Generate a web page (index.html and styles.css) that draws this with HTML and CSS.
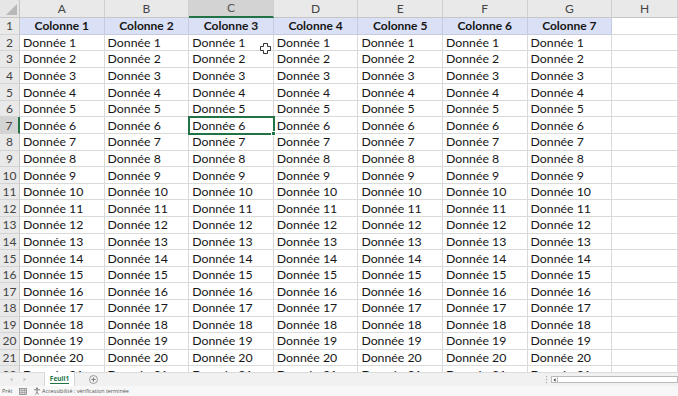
FILE: index.html
```html
<!DOCTYPE html>
<html lang="fr">
<head>
<meta charset="utf-8">
<title>Feuil1</title>
<link rel="stylesheet" href="styles.css">
</head>
<body>
<div class="app">
  <div class="sheet">
    <div class="grid">
      <div class="corner"><span class="tri"></span></div>
      <div class="ch">A</div><div class="ch">B</div><div class="ch sel">C</div><div class="ch">D</div><div class="ch">E</div><div class="ch">F</div><div class="ch">G</div><div class="ch">H</div>

      <div class="rh">1</div><div class="c th">Colonne 1</div><div class="c th">Colonne 2</div><div class="c th">Colonne 3</div><div class="c th">Colonne 4</div><div class="c th">Colonne 5</div><div class="c th">Colonne 6</div><div class="c th">Colonne 7</div><div class="c"></div>
      <div class="rh">2</div><div class="c">Donnée 1</div><div class="c">Donnée 1</div><div class="c">Donnée 1</div><div class="c">Donnée 1</div><div class="c">Donnée 1</div><div class="c">Donnée 1</div><div class="c">Donnée 1</div><div class="c"></div>
      <div class="rh">3</div><div class="c">Donnée 2</div><div class="c">Donnée 2</div><div class="c">Donnée 2</div><div class="c">Donnée 2</div><div class="c">Donnée 2</div><div class="c">Donnée 2</div><div class="c">Donnée 2</div><div class="c"></div>
      <div class="rh">4</div><div class="c">Donnée 3</div><div class="c">Donnée 3</div><div class="c">Donnée 3</div><div class="c">Donnée 3</div><div class="c">Donnée 3</div><div class="c">Donnée 3</div><div class="c">Donnée 3</div><div class="c"></div>
      <div class="rh">5</div><div class="c">Donnée 4</div><div class="c">Donnée 4</div><div class="c">Donnée 4</div><div class="c">Donnée 4</div><div class="c">Donnée 4</div><div class="c">Donnée 4</div><div class="c">Donnée 4</div><div class="c"></div>
      <div class="rh">6</div><div class="c">Donnée 5</div><div class="c">Donnée 5</div><div class="c">Donnée 5</div><div class="c">Donnée 5</div><div class="c">Donnée 5</div><div class="c">Donnée 5</div><div class="c">Donnée 5</div><div class="c"></div>
      <div class="rh rsel">7</div><div class="c">Donnée 6</div><div class="c">Donnée 6</div><div class="c active">Donnée 6<span class="handle"></span></div><div class="c">Donnée 6</div><div class="c">Donnée 6</div><div class="c">Donnée 6</div><div class="c">Donnée 6</div><div class="c"></div>
      <div class="rh">8</div><div class="c">Donnée 7</div><div class="c">Donnée 7</div><div class="c">Donnée 7</div><div class="c">Donnée 7</div><div class="c">Donnée 7</div><div class="c">Donnée 7</div><div class="c">Donnée 7</div><div class="c"></div>
      <div class="rh">9</div><div class="c">Donnée 8</div><div class="c">Donnée 8</div><div class="c">Donnée 8</div><div class="c">Donnée 8</div><div class="c">Donnée 8</div><div class="c">Donnée 8</div><div class="c">Donnée 8</div><div class="c"></div>
      <div class="rh">10</div><div class="c">Donnée 9</div><div class="c">Donnée 9</div><div class="c">Donnée 9</div><div class="c">Donnée 9</div><div class="c">Donnée 9</div><div class="c">Donnée 9</div><div class="c">Donnée 9</div><div class="c"></div>
      <div class="rh">11</div><div class="c">Donnée 10</div><div class="c">Donnée 10</div><div class="c">Donnée 10</div><div class="c">Donnée 10</div><div class="c">Donnée 10</div><div class="c">Donnée 10</div><div class="c">Donnée 10</div><div class="c"></div>
      <div class="rh">12</div><div class="c">Donnée 11</div><div class="c">Donnée 11</div><div class="c">Donnée 11</div><div class="c">Donnée 11</div><div class="c">Donnée 11</div><div class="c">Donnée 11</div><div class="c">Donnée 11</div><div class="c"></div>
      <div class="rh">13</div><div class="c">Donnée 12</div><div class="c">Donnée 12</div><div class="c">Donnée 12</div><div class="c">Donnée 12</div><div class="c">Donnée 12</div><div class="c">Donnée 12</div><div class="c">Donnée 12</div><div class="c"></div>
      <div class="rh">14</div><div class="c">Donnée 13</div><div class="c">Donnée 13</div><div class="c">Donnée 13</div><div class="c">Donnée 13</div><div class="c">Donnée 13</div><div class="c">Donnée 13</div><div class="c">Donnée 13</div><div class="c"></div>
      <div class="rh">15</div><div class="c">Donnée 14</div><div class="c">Donnée 14</div><div class="c">Donnée 14</div><div class="c">Donnée 14</div><div class="c">Donnée 14</div><div class="c">Donnée 14</div><div class="c">Donnée 14</div><div class="c"></div>
      <div class="rh">16</div><div class="c">Donnée 15</div><div class="c">Donnée 15</div><div class="c">Donnée 15</div><div class="c">Donnée 15</div><div class="c">Donnée 15</div><div class="c">Donnée 15</div><div class="c">Donnée 15</div><div class="c"></div>
      <div class="rh">17</div><div class="c">Donnée 16</div><div class="c">Donnée 16</div><div class="c">Donnée 16</div><div class="c">Donnée 16</div><div class="c">Donnée 16</div><div class="c">Donnée 16</div><div class="c">Donnée 16</div><div class="c"></div>
      <div class="rh">18</div><div class="c">Donnée 17</div><div class="c">Donnée 17</div><div class="c">Donnée 17</div><div class="c">Donnée 17</div><div class="c">Donnée 17</div><div class="c">Donnée 17</div><div class="c">Donnée 17</div><div class="c"></div>
      <div class="rh">19</div><div class="c">Donnée 18</div><div class="c">Donnée 18</div><div class="c">Donnée 18</div><div class="c">Donnée 18</div><div class="c">Donnée 18</div><div class="c">Donnée 18</div><div class="c">Donnée 18</div><div class="c"></div>
      <div class="rh">20</div><div class="c">Donnée 19</div><div class="c">Donnée 19</div><div class="c">Donnée 19</div><div class="c">Donnée 19</div><div class="c">Donnée 19</div><div class="c">Donnée 19</div><div class="c">Donnée 19</div><div class="c"></div>
      <div class="rh">21</div><div class="c">Donnée 20</div><div class="c">Donnée 20</div><div class="c">Donnée 20</div><div class="c">Donnée 20</div><div class="c">Donnée 20</div><div class="c">Donnée 20</div><div class="c">Donnée 20</div><div class="c"></div>
      <div class="rh">22</div><div class="c">Donnée 21</div><div class="c">Donnée 21</div><div class="c">Donnée 21</div><div class="c">Donnée 21</div><div class="c">Donnée 21</div><div class="c">Donnée 21</div><div class="c">Donnée 21</div><div class="c"></div>
    </div>
    <svg class="cursor" width="11" height="11" viewBox="0 0 11 11"><path d="M3.5 0.5h4v3h3v4h-3v3h-4v-3h-3v-4h3z" fill="#fff" stroke="#333" stroke-width="1"/></svg>
  </div>
  <div class="tabbar">
    <div class="nav">
      <svg width="4" height="5" viewBox="0 0 4 5"><path d="M3.5 0.5L0.8 2.5L3.5 4.5z" fill="#c4c4c4"/></svg>
      <svg width="4" height="5" viewBox="0 0 4 5"><path d="M0.5 0.5L3.2 2.5L0.5 4.5z" fill="#c4c4c4"/></svg>
    </div>
    <div class="tab"><span class="tabtext">Feuil1</span></div>
    <div class="add"><svg width="9" height="9" viewBox="0 0 9 9"><circle cx="4.5" cy="4.5" r="4" fill="none" stroke="#8a8a8a" stroke-width="0.8"/><path d="M4.5 2.3v4.4M2.3 4.5h4.4" stroke="#6a6a6a" stroke-width="0.8"/></svg></div>
    <div class="spacer"></div>
    <svg class="dots" width="3" height="9" viewBox="0 0 3 9"><circle cx="1.5" cy="1.5" r="0.7" fill="#aaa"/><circle cx="1.5" cy="4.5" r="0.7" fill="#aaa"/><circle cx="1.5" cy="7.5" r="0.7" fill="#aaa"/></svg>
    <div class="hscroll">
      <span class="sbtn"><svg width="3" height="4" viewBox="0 0 3 4"><path d="M2.6 0.2L0.4 2L2.6 3.8z" fill="#444"/></svg></span>
      <span class="track"></span>
    </div>
  </div>
  <div class="status">
    <span class="ready">Prêt</span>
    <svg class="ico" width="8" height="7" viewBox="0 0 8 7"><rect x="0.5" y="0.5" width="7" height="6" fill="#ddd" stroke="#777" stroke-width="0.7"/><path d="M0.5 2.5h7M0.5 4.5h7M3 0.5v6M5.5 0.5v6" stroke="#888" stroke-width="0.5"/></svg>
    <svg class="ico acc" width="8" height="8" viewBox="0 0 8 8"><circle cx="4" cy="1.3" r="0.9" fill="#666"/><path d="M1 2.8h6M4 2.8v2.4M4 5.2l-1.6 2.3M4 5.2l1.6 2.3" stroke="#666" stroke-width="0.8" fill="none"/></svg>
    <span class="acctext">Accessibilité : vérification terminée</span>
  </div>
</div>
</body>
</html>
```

FILE: styles.css
```css
* { box-sizing: border-box; }
html, body { margin: 0; padding: 0; background: #fff; }
body { width: 678px; height: 396px; overflow: hidden; font-family: Lato, "Open Sans", sans-serif; }

.app { display: flex; flex-direction: column; height: 396px; }

.sheet { position: relative; height: 372px; overflow: hidden; flex: none; }

.grid {
  display: grid;
  grid-template-columns: 20px repeat(7, 84.6px) 1fr;
  grid-template-rows: 17.5px 17px repeat(21, 16.6px);
}

.corner {
  position: relative;
  background: #e6e6e6;
  border-right: 1px solid #c6c6c6;
  border-bottom: 1px solid #c6c6c6;
}
.tri {
  position: absolute; right: 2px; bottom: 2px;
  width: 0; height: 0;
  border-left: 11px solid transparent;
  border-bottom: 11px solid #b8b8b8;
}

.ch {
  display: flex; align-items: center; justify-content: center;
  background: #e9e9e9;
  color: #444;
  font-size: 12px;
  border-right: 1px solid #cfcfcf;
  border-bottom: 1px solid #c6c6c6;
}
.ch.sel {
  background: #d3d3d3;
  color: #555;
  border-bottom: 2px solid #217346;
}

.rh {
  display: flex; align-items: center; justify-content: center;
  background: #e9e9e9;
  color: #444;
  font-size: 12px;
  border-right: 1px solid #c6c6c6;
  border-bottom: 1px solid #d4d4d4;
}
.rh.rsel {
  background: #d3d3d3;
  border-right: 2px solid #217346;
}

.c {
  position: relative;
  display: flex; align-items: center;
  padding-left: 3px;
  font-size: 12.3px;
  color: #161616;
  white-space: nowrap;
  overflow: hidden;
  border-right: 1px solid #dadada;
  border-bottom: 1px solid #dadada;
}
.c.th {
  justify-content: center;
  padding-left: 0;
  font-size: 12px;
  font-weight: 700;
  background: #dae0f5;
  border-right-color: #c8cbe0;
  border-bottom-color: #c8cbe0;
}
.c.active {
  overflow: visible;
  outline: 2px solid #217346;
  outline-offset: -1px;
  z-index: 2;
}
.handle {
  position: absolute; right: -3px; bottom: -3px;
  width: 5px; height: 5px;
  background: #217346;
  border: 1px solid #fff;
}

.cursor { position: absolute; left: 260px; top: 43px; }

.tabbar {
  flex: none;
  height: 14px;
  display: flex; align-items: stretch;
  background: #f1f1f1;
  border-top: 1px solid #dcdcdc;
}
.nav { display: flex; align-items: center; gap: 10px; padding-left: 9px; width: 44px; }
.tab {
  width: 31px;
  display: flex; align-items: center; justify-content: center;
  background: #fff;
  border-left: 1px solid #d6d6d6;
  border-right: 1px solid #d6d6d6;
  margin-top: -1px;
}
.tabtext {
  color: #217346;
  font-weight: 700;
  font-family: "Open Sans", sans-serif;
  font-size: 6.5px;
  line-height: 8px;
  border-bottom: 1px solid #217346;
}
.add { display: flex; align-items: center; padding-left: 14px; }
.spacer { flex: 1; }
.dots { align-self: center; margin-right: 3px; }
.hscroll { width: 127px; display: flex; align-items: center; }
.sbtn {
  width: 7px; height: 7px;
  display: flex; align-items: center; justify-content: center;
  border: 1px solid #bbb; background: #fff;
}
.track { flex: 1; height: 7px; background: #fff; border: 1px solid #bbb; border-left: none; }

.status {
  flex: 1;
  display: flex; align-items: center;
  background: #f7f7f7;
  font-family: "Open Sans", sans-serif;
  font-size: 5.4px;
  line-height: 8px;
  color: #555;
  padding-left: 2px;
}
.ready { width: 17px; }
.ico { margin-right: 6px; }
.acc { margin-right: 1px; }
.acctext { color: #555; }
```
